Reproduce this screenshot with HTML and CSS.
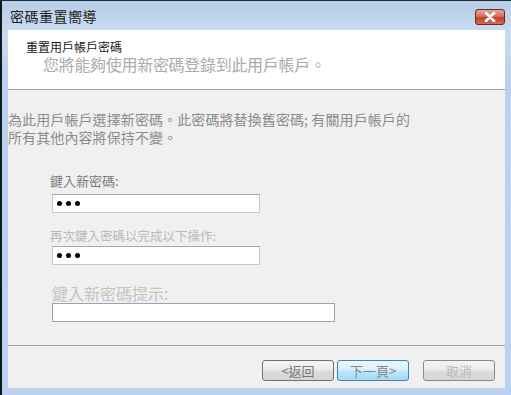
FILE: index.html
```html
<!DOCTYPE html>
<html lang="zh-Hant">
<head>
    <meta charset="UTF-8">
    <title>密碼重置嚮導</title>
    <link rel="stylesheet" href="styles.css">
</head>
<body>
    <div class="window">
        <div class="titlebar">
            <div class="title">密碼重置嚮導</div>
            <div class="close-btn">
                <svg width="14" height="10" viewBox="0 0 14 10">
                    <path d="M3 1 L11 9 M11 1 L3 9" stroke="#fff" stroke-width="2.6" stroke-linecap="round"/>
                </svg>
            </div>
        </div>

        <div class="client">
            <!-- ENCABEZADO BLANCO -->
            <div class="header">
                <div class="header-title">重置用戶帳戶密碼</div>
                <div class="header-sub">您將能夠使用新密碼登錄到此用戶帳戶。</div>
            </div>

            <!-- CONTENIDO -->
            <div class="content">
                <p class="intro">為此用戶帳戶選擇新密碼。此密碼將替換舊密碼; 有關用戶帳戶的<br>所有其他內容將保持不變。</p>

                <div class="form">
                    <div class="label first">鍵入新密碼:</div>
                    <div class="input short"><span class="dot"></span><span class="dot"></span><span class="dot"></span></div>

                    <div class="label faint">再次鍵入密碼以完成以下操作:</div>
                    <div class="input short"><span class="dot"></span><span class="dot"></span><span class="dot"></span></div>

                    <div class="label big">鍵入新密碼提示:</div>
                    <div class="input long"></div>
                </div>
            </div>

            <!-- BOTONES -->
            <div class="footer">
                <div class="btn">&lt;返回</div>
                <div class="btn primary">下一頁&gt;</div>
                <div class="btn disabled">取消</div>
            </div>
        </div>
    </div>
</body>
</html>
```

FILE: styles.css
```css
* { box-sizing: border-box; }
html, body { margin: 0; height: 100%; }
body { background: #141c28; font-family: "Noto Sans CJK TC", "Noto Sans", sans-serif; overflow: hidden; }

/* MARCO DE LA VENTANA */
.window {
    height: 395px; width: 511px;
    border-top: 1px solid #1d2a3c; border-left: 2px solid #101820;
    background: linear-gradient(to bottom, #b7cde6 0px, #c9dbef 30px, #b9d1ea 80px, #bad2ec 100%);
    display: flex; flex-direction: column;
}

.titlebar {
    height: 29px; display: flex; align-items: center;
    padding: 0 6px 0 8px;
}
.title { font-size: 14px; color: #222; flex: 1; padding-top: 1px; letter-spacing: 0.5px; }

.close-btn {
    width: 30px; height: 16px; border-radius: 3px;
    border: 1px solid #6c2a22;
    background: linear-gradient(to bottom, #e6a79c 0%, #d56f60 45%, #c2402e 55%, #d46a52 100%);
    display: flex; align-items: center; justify-content: center;
    margin-top: 3px;
}

/* AREA CLIENTE */
.client { flex: 1; margin: 0 6px 7px 6px; display: flex; flex-direction: column; }

.header { height: 60px; background: #fff; border-bottom: 1px solid #a0a0a0; padding: 8px 0 0 18px; }
.header-title { font-size: 12px; color: #1a1a1a; line-height: 18px; }
.header-sub { font-size: 16px; color: #ababab; line-height: 17px; padding-left: 17px; letter-spacing: -0.3px; }

.content { flex: 1; background: #f0f0f0; padding: 20px 0 0 0; }
.intro { margin: 0; font-size: 14px; line-height: 18px; color: #8c8c8c; letter-spacing: 0.1px; }

.form { padding: 27px 0 0 42px; display: flex; flex-direction: column; align-items: flex-start; }
.label { font-size: 13px; color: #7a7a7a; line-height: 16px; }
.label.first { margin-bottom: 5px; }
.label.faint { color: #b8b8b8; font-size: 12.5px; margin-top: 15px; margin-bottom: 2px; }
.label.big { font-size: 16px; color: #c4c4c4; line-height: 18px; margin-top: 19px; margin-bottom: 1px; padding-left: 2px; }

.input {
    height: 19px; background: #fff; border: 1px solid #c8c8c8;
    border-top-color: #a8a8a8; margin-left: 2px;
    display: flex; align-items: center; gap: 4px; padding-left: 4px;
}
.input.short { width: 208px; }
.input.long { width: 283px; border-color: #8fa8bf; }
.dot { width: 5px; height: 5px; border-radius: 50%; background: #000; }

.footer {
    height: 43px; background: #f0f0f0; border-top: 1px solid #a0a0a0;
    display: flex; align-items: flex-start; justify-content: flex-end;
    padding: 14px 10px 0 0; gap: 3px;
}
.btn {
    width: 72px; height: 21px; border-radius: 3px;
    border: 1px solid #707070;
    background: linear-gradient(to bottom, #f4f4f4 0%, #ebebeb 48%, #dcdcdc 52%, #d6d6d6 100%);
    font-size: 13px; color: #777; text-align: center; line-height: 19px;
}
.btn.primary {
    border-color: #3a84b6;
    background: linear-gradient(to bottom, #eaf6fd 0%, #d9effc 48%, #bde6fd 52%, #a7d9f5 100%);
    color: #888;
}
.btn.disabled { margin-left: 11px; border-color: #8a8a8a; color: #bbb; }
```
